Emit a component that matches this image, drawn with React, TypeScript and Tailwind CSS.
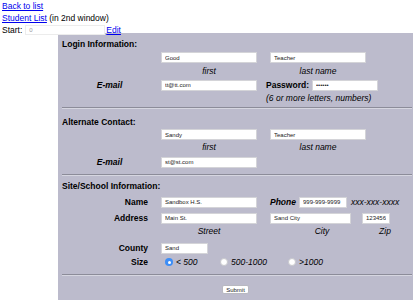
import React from "react";

const inp =
  "h-[11px] bg-white border border-[#d4d4d8] px-[3px] text-[6px] leading-none text-[#222] outline-none";

function Radio({ checked }: { checked?: boolean }) {
  if (checked) {
    return (
      <span className="w-[8px] h-[8px] rounded-full bg-[#3d8ef7] flex items-center justify-center">
        <span className="w-[3px] h-[3px] rounded-full bg-white" />
      </span>
    );
  }
  return <span className="w-[8px] h-[8px] rounded-full bg-white border border-[#c8c8cc]" />;
}

function Divider() {
  return <div className="ml-[4px] mr-[1px] h-[2px] border-t border-t-[#8c8c99] border-b border-b-[#d6d6e0]" />;
}

export default function App() {
  return (
    <div className="font-['Liberation_Sans',Arial,sans-serif] text-[8.5px] leading-[12px] text-black bg-white w-[420px] h-[300px] overflow-hidden">
      {/* top links */}
      <div className="h-[33px] pl-[2px]">
        <div>
          <a href="#" className="text-[#0000ee] underline">Back to list</a>
        </div>
        <div>
          <a href="#" className="text-[#0000ee] underline">Student List</a> (in 2nd window)
        </div>
        <div className="flex items-center h-[12px]">
          <span>Start:</span>
          <input
            readOnly
            defaultValue="0"
            className="ml-[3px] w-[80px] h-[10px] bg-white border border-[#ececec] px-[3px] text-[6px] leading-none text-[#999] outline-none"
          />
          <a href="#" className="ml-[1px] text-[#0000ee] underline">Edit</a>
        </div>
      </div>

      {/* form panel */}
      <div className="ml-[58px] w-[355px] bg-[#bcbbcc] pb-[10px]">
        {/* Login */}
        <div className="h-[12px] pt-[5px] box-content flex items-center pl-[4px] font-bold">Login Information:</div>
        <div className="h-[15px] flex items-center">
          <div className="w-[103px]" />
          <input readOnly defaultValue="Good" className={inp + " w-[96px]"} />
          <input readOnly defaultValue="Teacher" className={inp + " w-[96px] ml-[13px]"} />
        </div>
        <div className="h-[12px] flex items-center italic">
          <div className="w-[103px]" />
          <div className="w-[96px] text-center">first</div>
          <div className="w-[96px] ml-[13px] text-center">last name</div>
        </div>
        <div className="h-[16px] flex items-center">
          <div className="w-[103px] text-center font-bold italic">E-mail</div>
          <input readOnly defaultValue="tt@tt.com" className={inp + " w-[96px]"} />
          <span className="ml-[9px] font-bold">Password:</span>
          <input readOnly type="password" defaultValue="tttttt" className={inp + " w-[66px] ml-[3px]"} />
        </div>
        <div className="h-[10px] flex items-center italic pl-[208px]">(6 or more letters, numbers)</div>
        <div className="pt-[4px]">
          <Divider />
        </div>

        {/* Alternate contact */}
        <div className="h-[12px] mt-[7px] flex items-center pl-[4px] font-bold">Alternate Contact:</div>
        <div className="h-[13px] flex items-center">
          <div className="w-[103px]" />
          <input readOnly defaultValue="Sandy" className={inp + " w-[96px]"} />
          <input readOnly defaultValue="Teacher" className={inp + " w-[96px] ml-[13px]"} />
        </div>
        <div className="h-[11px] flex items-center italic">
          <div className="w-[103px]" />
          <div className="w-[96px] text-center">first</div>
          <div className="w-[96px] ml-[13px] text-center">last name</div>
        </div>
        <div className="h-[20px] flex items-center">
          <div className="w-[103px] text-center font-bold italic">E-mail</div>
          <input readOnly defaultValue="st@st.com" className={inp + " w-[96px]"} />
        </div>
        <div className="pt-[2px]">
          <Divider />
        </div>

        {/* Site / school */}
        <div className="h-[11px] mt-[4px] flex items-center pl-[4px] font-bold">Site/School Information:</div>
        <div className="h-[16px] mt-[3px] flex items-center">
          <div className="w-[103px] pr-[13px] text-right font-bold">Name</div>
          <input readOnly defaultValue="Sandbox H.S." className={inp + " w-[96px]"} />
          <span className="ml-[13px] font-bold italic">Phone</span>
          <input readOnly defaultValue="999-999-9999" className={inp + " w-[48px] ml-[3px]"} />
          <span className="ml-[4px] italic">xxx-xxx-xxxx</span>
        </div>
        <div className="h-[16px] flex items-center">
          <div className="w-[103px] pr-[13px] text-right font-bold">Address</div>
          <input readOnly defaultValue="Main St." className={inp + " w-[96px]"} />
          <input readOnly defaultValue="Sand City" className={inp + " w-[81px] ml-[13px]"} />
          <input readOnly defaultValue="123456" className={inp + " w-[28px] ml-[11px]"} />
        </div>
        <div className="h-[10px] flex items-center italic">
          <div className="w-[103px]" />
          <div className="w-[96px] text-center">Street</div>
          <div className="w-[104px] ml-[13px] text-center">City</div>
          <div className="w-[22px] text-center">Zip</div>
        </div>
        <div className="h-[14px] mt-[5px] flex items-center">
          <div className="w-[103px] pr-[13px] text-right font-bold">County</div>
          <input readOnly defaultValue="Sand" className={inp + " w-[47px]"} />
        </div>
        <div className="h-[14px] flex items-center italic">
          <div className="w-[103px] pr-[13px] text-right font-bold not-italic">Size</div>
          <div className="w-[59px] pl-[4px] flex items-center gap-[3px]">
            <Radio checked />
            <span>&lt; 500</span>
          </div>
          <div className="w-[68px] flex items-center gap-[3px]">
            <Radio />
            <span>500-1000</span>
          </div>
          <div className="flex items-center gap-[3px]">
            <Radio />
            <span>&gt;1000</span>
          </div>
        </div>
        <div className="pt-[5px]">
          <Divider />
        </div>
        <div className="mt-[9px] flex justify-center">
          <button className="h-[9px] w-[27px] bg-white border border-[#b8b8c0] rounded-[2px] text-[6px] leading-none text-[#222]">
            Submit
          </button>
        </div>
      </div>
    </div>
  );
}
